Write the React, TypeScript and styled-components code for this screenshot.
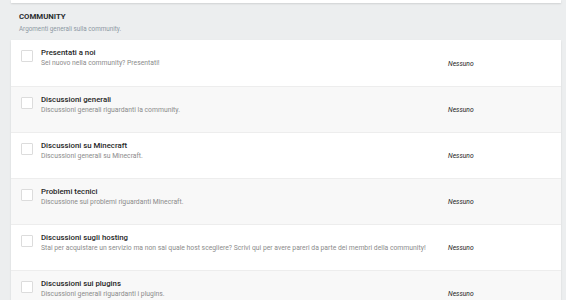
import styled, { createGlobalStyle } from "styled-components";

const GlobalStyle = createGlobalStyle`
  html, body {
    margin: 0;
    padding: 0;
    background: #eceeef;
    font-family: Roboto, "Liberation Sans", sans-serif;
  }
`;

const Page = styled.div`
  padding: 0 5px 0 11px;
  width: 566px;
  box-sizing: border-box;
  overflow: hidden;
  height: 300px;
`;

const TopPanel = styled.div`
  height: 3px;
  background: #fff;
  box-shadow: 0 1px 2px rgba(0, 0, 0, 0.12);
`;

const SectionHeader = styled.div`
  padding: 9px 8px 6px;
`;

const SectionTitle = styled.h2`
  margin: 0;
  font-size: 7.8px;
  font-weight: 700;
  color: #2a2d30;
  text-transform: uppercase;
  line-height: 10px;
`;

const SectionSubtitle = styled.p`
  margin: 2px 0 0;
  font-size: 6.3px;
  color: #8c99a3;
  line-height: 10px;
`;

const List = styled.div`
  background: #fff;
  box-shadow: 0 1px 2px rgba(0, 0, 0, 0.1);
`;

const Row = styled.div<{ $alt?: boolean }>`
  display: grid;
  grid-template-columns: 30px 1fr 113px;
  height: 46px;
  box-sizing: border-box;
  border-top: 1px solid #ededed;
  background: ${({ $alt }) => ($alt ? "#f8f8f8" : "#fff")};

  &:first-child {
    border-top: none;
  }
`;

const CheckCell = styled.div`
  padding: 10px 0 0 10px;
`;

const Check = styled.span`
  display: block;
  width: 10px;
  height: 10px;
  border: 1px solid #dcdcdc;
  border-radius: 1px;
  background: #fff;
`;

const Info = styled.div`
  padding-top: 8px;
`;

const ForumName = styled.div`
  font-size: 7.8px;
  font-weight: 500;
  color: #1f1f1f;
  line-height: 10px;
`;

const ForumDesc = styled.div`
  font-size: 6.8px;
  color: #8b8b8b;
  line-height: 10px;
`;

const LastPost = styled.div`
  display: flex;
  align-items: center;
  font-size: 6.7px;
  font-style: italic;
  color: #222;
  padding-top: 1px;
`;

const forums = [
  { name: "Presentati a noi", desc: "Sei nuovo nella community? Presentati!" },
  { name: "Discussioni generali", desc: "Discussioni generali riguardanti la community." },
  { name: "Discussioni su Minecraft", desc: "Discussioni generali su Minecraft." },
  { name: "Problemi tecnici", desc: "Discussione sui problemi riguardanti Minecraft." },
  {
    name: "Discussioni sugli hosting",
    desc: "Stai per acquistare un servizio ma non sai quale host scegliere? Scrivi qui per avere pareri da parte dei membri della community!",
  },
  { name: "Discussioni sui plugins", desc: "Discussioni generali riguardanti i plugins." },
];

export default function App() {
  return (
    <>
      <GlobalStyle />
      <Page>
        <TopPanel />
        <SectionHeader>
          <SectionTitle>Community</SectionTitle>
          <SectionSubtitle>Argomenti generali sulla community.</SectionSubtitle>
        </SectionHeader>
        <List>
          {forums.map((f, i) => (
            <Row key={f.name} $alt={i % 2 === 1}>
              <CheckCell>
                <Check />
              </CheckCell>
              <Info>
                <ForumName>{f.name}</ForumName>
                <ForumDesc>{f.desc}</ForumDesc>
              </Info>
              <LastPost>Nessuno</LastPost>
            </Row>
          ))}
        </List>
      </Page>
    </>
  );
}
